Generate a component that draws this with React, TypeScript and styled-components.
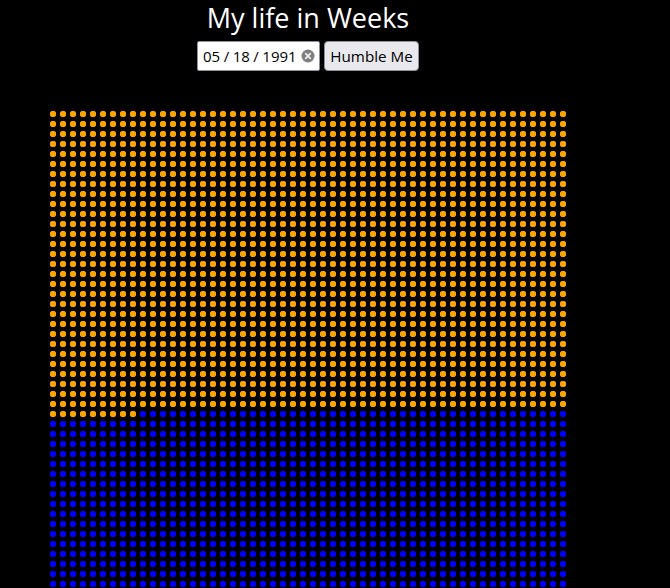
import React from "react";
import styled, { createGlobalStyle } from "styled-components";

const Global = createGlobalStyle`
  html, body { margin: 0; padding: 0; background: #000; overflow: hidden; height: 100%; }
  #root { height: 100%; }
`;

const Page = styled.main`
  width: 616px;
  height: 588px;
  overflow: hidden;
  font-family: "Open Sans", "Noto Sans", sans-serif;
  color: #fff;
`;

const Title = styled.h1`
  margin: 0;
  height: 41px;
  font-size: 27px;
  line-height: 35px;
  font-weight: 400;
  text-align: center;
`;

const Controls = styled.form`
  display: flex;
  justify-content: center;
  gap: 4px;
  height: 30px;
  margin: 0 0 40px;
`;

const DateField = styled.div`
  box-sizing: border-box;
  width: 123px;
  height: 30px;
  display: flex;
  align-items: center;
  justify-content: space-between;
  padding: 0 4px 0 5px;
  background: #fff;
  border: 1px solid #8f8f9d;
  border-radius: 2px;
  color: #000;
  font-size: 15px;
  white-space: nowrap;
`;

const Slash = styled.span`
  margin: 0 3.5px;
`;

const Humble = styled.button`
  box-sizing: border-box;
  width: 95px;
  height: 30px;
  padding: 0;
  background: #e9e9ed;
  border: 1px solid #8f8f9d;
  border-radius: 4px;
  color: #000;
  font-family: inherit;
  font-size: 15.2px;
`;

const DotGrid = styled.div`
  display: grid;
  grid-template-columns: repeat(52, 6px);
  grid-auto-rows: 6px;
  gap: 4px;
  margin-left: 50px;
`;

const Dot = styled.span<{ $lived: boolean }>`
  border-radius: 50%;
  background: ${(p) => (p.$lived ? "orange" : "blue")};
  box-shadow: 0 0 0.5px ${(p) => (p.$lived ? "orange" : "blue")};
`;

const LIVED = 30 * 52 + 9;
const weeks = Array.from({ length: 52 * 50 }, (_, i) => i < LIVED);

export default function App() {
  return (
    <Page>
      <Global />
      <Title>My life in Weeks</Title>
      <Controls onSubmit={(e) => e.preventDefault()}>
        <DateField>
          <span>
            05<Slash>/</Slash>18<Slash>/</Slash>1991
          </span>
          <svg width="14" height="14" viewBox="0 0 14 14" aria-label="clear">
            <circle cx="7" cy="7" r="6.5" fill="#7f7f7f" />
            <path d="M4.7 4.7l4.6 4.6M9.3 4.7l-4.6 4.6" stroke="#fff" strokeWidth="1.8" strokeLinecap="round" opacity="0.85" />
          </svg>
        </DateField>
        <Humble type="submit">Humble Me</Humble>
      </Controls>
      <DotGrid>
        {weeks.map((lived, i) => (
          <Dot key={i} $lived={lived} />
        ))}
      </DotGrid>
    </Page>
  );
}
